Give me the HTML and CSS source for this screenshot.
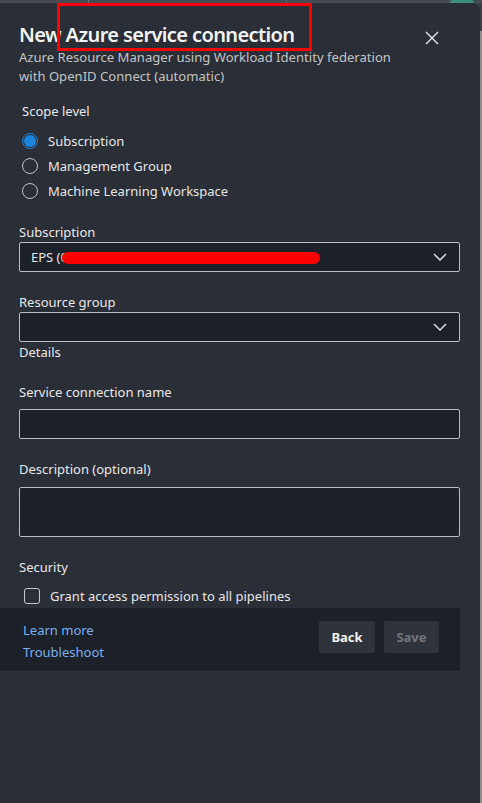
FILE: index.html
```html
<!DOCTYPE html>
<html lang="en">
<head>
<meta charset="utf-8">
<title>New Azure service connection</title>
<link rel="stylesheet" href="styles.css">
</head>
<body>
<div class="topbar">
  <span class="tab-sep first"></span>
  <span class="tab-sep second"></span>
  <span class="teal"></span>
</div>
<div class="frame">
  <div class="panel">
    <div class="content">
      <div class="header">
        <div class="titles">
          <h1 class="title">New Azure service connection</h1>
          <p class="subtitle">Azure Resource Manager using Workload Identity federation with OpenID Connect (automatic)</p>
        </div>
        <button class="close" aria-label="Close">
          <svg width="14" height="14" viewBox="0 0 14 14"><path d="M1 1L13 13M13 1L1 13" stroke="#e8e8e8" stroke-width="1.4" fill="none"/></svg>
        </button>
      </div>

      <div class="section-label scope">Scope level</div>
      <div class="radios">
        <label class="radio-row"><span class="radio checked"><span class="dot"></span></span><span>Subscription</span></label>
        <label class="radio-row"><span class="radio"></span><span>Management Group</span></label>
        <label class="radio-row"><span class="radio"></span><span>Machine Learning Workspace</span></label>
      </div>

      <div class="field first-field">
        <div class="label">Subscription</div>
        <div class="select">
          <span class="select-text">EPS (0000000000)</span>
          <svg class="chev" width="14" height="8" viewBox="0 0 14 8"><path d="M1 1L7 7L13 1" stroke="#d6d6d6" stroke-width="1.6" fill="none"/></svg>
        </div>
      </div>

      <div class="field">
        <div class="label">Resource group</div>
        <div class="select">
          <span class="select-text"></span>
          <svg class="chev" width="14" height="8" viewBox="0 0 14 8"><path d="M1 1L7 7L13 1" stroke="#d6d6d6" stroke-width="1.6" fill="none"/></svg>
        </div>
        <div class="label">Details</div>
      </div>

      <div class="field">
        <div class="label gap-label">Service connection name</div>
        <div class="input"></div>
      </div>

      <div class="field">
        <div class="label gap-label desc-label">Description (optional)</div>
        <div class="input textarea"></div>
      </div>

      <div class="field">
        <div class="label">Security</div>
        <label class="check-row"><span class="checkbox"></span><span>Grant access permission to all pipelines</span></label>
      </div>
    </div>

    <div class="footer">
      <div class="links">
        <a class="link" href="#">Learn more</a>
        <a class="link" href="#">Troubleshoot</a>
      </div>
      <div class="buttons">
        <button class="btn primary">Back</button>
        <button class="btn disabled">Save</button>
      </div>
    </div>

    <div class="annot-box"></div>
    <div class="annot-scribble"></div>
  </div>
  <div class="scrollbar"></div>
</div>
</body>
</html>
```

FILE: styles.css
```css
* { box-sizing: border-box; }
html, body { margin: 0; padding: 0; }
body {
  width: 482px;
  height: 803px;
  overflow: hidden;
  background: #3a3e46;
  font-family: "Noto Sans", "Open Sans", sans-serif;
  color: #e6e6e6;
}
.topbar {
  position: relative;
  height: 3px;
  background: #474b52;
}
.tab-sep {
  position: absolute;
  top: 0;
  width: 1px;
  height: 3px;
  background: #6a6e75;
}
.tab-sep.first { left: 88px; }
.tab-sep.second { left: 286px; }
.teal {
  position: absolute;
  right: 8px;
  top: 0;
  width: 24px;
  height: 3px;
  background: #3b8f7e;
  border-radius: 6px 6px 0 0;
}
.frame {
  display: flex;
  height: 800px;
}
.panel {
  position: relative;
  flex: 1;
  background: #2a2e37;
  border-top-right-radius: 8px;
}
.scrollbar {
  width: 2px;
  margin-top: 28px;
  background: #8e8e8e;
}
.content {
  padding: 19px 20px 0 19px;
}
.header {
  display: flex;
  justify-content: space-between;
  align-items: flex-start;
}
.title {
  margin: 0;
  font-size: 20px;
  line-height: 26px;
  font-weight: 600;
  color: #f4f4f4;
  letter-spacing: -0.6px;
}
.subtitle {
  margin: 0;
  width: 390px;
  font-size: 13.1px;
  line-height: 19px;
  color: #c4c4c4;
}
.close {
  background: none;
  border: 0;
  padding: 0;
  margin: 9px 21px 0 0;
  width: 14px;
  height: 14px;
  display: flex;
}
.section-label, .label {
  font-size: 13px;
  line-height: 20px;
  color: #e8e8e8;
}
.scope {
  margin-top: 15px;
  padding-left: 3px;
}
.radios {
  margin-top: 7px;
  display: flex;
  flex-direction: column;
}
.radio-row {
  display: flex;
  align-items: center;
  height: 25px;
  font-size: 13px;
  color: #e6e6e6;
  gap: 10px;
  padding-left: 3px;
}
.radio {
  width: 16px;
  height: 16px;
  border-radius: 50%;
  border: 1px solid #c0c0c0;
  display: flex;
  align-items: center;
  justify-content: center;
}
.radio.checked {
  border: 1px solid #1a86e0;
}
.radio .dot {
  width: 12px;
  height: 12px;
  border-radius: 50%;
  background: #1a86e0;
}
.field {
  margin-top: 20px;
}
.first-field { margin-top: 19px; }
.gap-label { margin-bottom: 7px; }
.desc-label { margin-bottom: 8px; }
.select, .input {
  height: 30px;
  border: 1px solid #bdbdbd;
  border-radius: 2px;
  background: #1c2029;
  display: flex;
  align-items: center;
  justify-content: space-between;
  padding: 0 12px 0 11px;
}
.select-text {
  font-size: 13px;
  color: #e6e6e6;
  white-space: nowrap;
}
.chev { display: block; }
.textarea { height: 50px; }
.check-row {
  display: flex;
  align-items: center;
  gap: 10px;
  height: 20px;
  margin-top: 9px;
  padding-left: 5px;
  font-size: 13px;
  color: #e6e6e6;
}
.checkbox {
  width: 16px;
  height: 16px;
  border: 1px solid #c8c8c8;
  border-radius: 3px;
}
.footer {
  margin-top: 2px;
  margin-right: 20px;
  height: 63px;
  background: #1c2029;
  display: flex;
  justify-content: space-between;
  align-items: flex-start;
  padding: 0 21px 0 23px;
}
.links {
  display: flex;
  flex-direction: column;
  padding-top: 11px;
}
.link {
  font-size: 13px;
  line-height: 22px;
  color: #7ab0ee;
  text-decoration: none;
}
.buttons {
  display: flex;
  gap: 9px;
  padding-top: 13px;
}
.btn {
  height: 32px;
  border: 0;
  border-radius: 2px;
  background: #2f333c;
  font-family: "Noto Sans", "Open Sans", sans-serif;
  font-size: 13px;
  font-weight: 700;
  padding: 0;
}
.btn.primary { width: 56px; color: #f2f2f2; }
.btn.disabled { width: 55px; color: #74777d; }
.annot-box {
  position: absolute;
  left: 57px;
  top: 0;
  width: 255px;
  height: 48px;
  border: 3px solid #ff0000;
}
.annot-scribble {
  position: absolute;
  left: 62px;
  top: 249px;
  width: 258px;
  height: 12px;
  border-radius: 6px;
  background: #ff0000;
}
```
